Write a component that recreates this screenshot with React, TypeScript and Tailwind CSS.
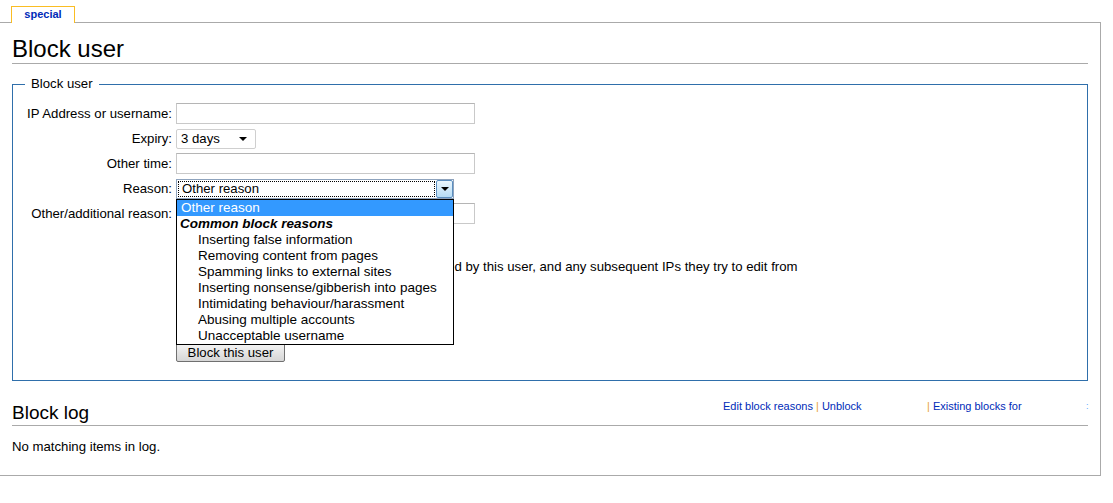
import React from 'react';

const reasons = [
    'Inserting false information',
    'Removing content from pages',
    'Spamming links to external sites',
    'Inserting nonsense/gibberish into pages',
    'Intimidating behaviour/harassment',
    'Abusing multiple accounts',
    'Unacceptable username',
];

function Row({ label, children }: { label?: string; children: React.ReactNode }) {
    return (
        <div className="flex h-[25px] items-center">
            <label className="w-[159px] shrink-0 text-right whitespace-nowrap">{label}</label>
            <div className="relative ml-[4px] flex items-center">{children}</div>
        </div>
    );
}

function TextInput() {
    return <div className="h-[21px] w-[299px] border border-[#c9c9c9] border-t-[#b5b5b5] bg-white" />;
}

export default function App() {
    return (
        <div className="min-h-screen bg-white pt-[6px] font-['Liberation_Sans',Arial,sans-serif] text-[13.2px] text-black">
            {/* Tabs */}
            <div className="flex pl-[11px]">
                <div className="relative z-10 -mb-px h-[17px] w-[64px] border border-b-0 border-[#fabd23] bg-white text-center text-[11px] leading-[15px] font-bold text-[#002bb8]">
                    special
                </div>
            </div>

            {/* Content box */}
            <div className="w-[1101px] border-y border-r border-[#aaaaaa] px-[12px] pb-[18px]">
                <h1 className="mt-[11px] border-b border-[#aaaaaa] text-[24px] leading-[29px] font-normal">Block user</h1>

                <fieldset className="mt-[12px] border border-[#2f6fab] pb-[17px]">
                    <legend className="ml-[12px] px-[6px] leading-[16px]">Block user</legend>
                    <div className="pt-[9px]">
                        <Row label="IP Address or username:">
                            <TextInput />
                        </Row>
                        <Row label="Expiry:">
                            <div className="mt-[1px] flex h-[20px] w-[80px] items-center justify-between rounded-[2px] border border-[#cfcfcf] bg-white pr-[8px] pl-[4px]">
                                <span>3 days</span>
                                <span className="h-0 w-0 border-x-[4px] border-t-[4px] border-x-transparent border-t-black" />
                            </div>
                        </Row>
                        <Row label="Other time:">
                            <TextInput />
                        </Row>
                        <Row label="Reason:">
                            <div className="mt-[1px] flex h-[20px] w-[278px] border border-[#8ea3bd] bg-white">
                                <div className="m-[1px] flex flex-1 items-center border border-dotted border-black pl-[3px] leading-[14px]">
                                    Other reason
                                </div>
                                <div className="flex w-[17px] items-center justify-center rounded-[2px] border border-[#5c8fc0] bg-gradient-to-b from-[#eaf6fd] to-[#b6dcf5]">
                                    <span className="h-0 w-0 border-x-[4px] border-t-[4px] border-x-transparent border-t-black" />
                                </div>
                            </div>
                            {/* Open dropdown list */}
                            <div className="absolute top-full left-0 z-20 w-[278px] border border-black bg-white text-[13.5px] leading-[16px] whitespace-nowrap">
                                <div className="h-[16px] bg-[#3399ff] pl-[4px] text-white">Other reason</div>
                                <div className="h-[16px] pl-[3px] font-bold italic">Common block reasons</div>
                                {reasons.map((r) => (
                                    <div key={r} className="h-[16px] pl-[21px]">
                                        {r}
                                    </div>
                                ))}
                            </div>
                        </Row>
                        <Row label="Other/additional reason:">
                            <TextInput />
                        </Row>

                        {/* Options (mostly behind the open list) */}
                        <div className="h-[28px]" />
                        <div className="flex h-[25px] items-center pl-[163px] whitespace-nowrap">
                            <span className="h-[13px] w-[13px] border border-[#1c5180] bg-white" />
                            <span className="ml-[15px]">
                                Automatically block the last IP address used by this user, and any subsequent IPs they try to edit from
                            </span>
                        </div>
                        <div className="h-[50px]" />

                        <div className="mt-[14px] pl-[163px]">
                            <button className="h-[19px] w-[109px] rounded-[2px] border border-[#707070] bg-gradient-to-b from-[#f4f4f4] to-[#d6d6d6] leading-[15px]">
                                Block this user
                            </button>
                        </div>
                    </div>
                </fieldset>

                {/* Block log */}
                <div className="mt-[19px] flex h-[26px] items-start border-b border-[#aaaaaa]">
                    <h2 className="w-[711px] shrink-0 text-[19px] leading-[25px] font-normal">Block log</h2>
                    <div className="flex text-[11px] leading-[13px] whitespace-nowrap text-[#002bb8]">
                        <span className="w-[204px] shrink-0">
                            Edit block reasons<span className="text-[#e8a33c]"> | </span>Unblock
                        </span>
                        <span className="w-[159px] shrink-0">
                            <span className="text-[#e8a33c]">|</span> Existing blocks for
                        </span>
                        <span className="text-[9px] text-[#5aa7ff]">:</span>
                    </div>
                </div>
                <p className="mt-[11px] leading-[20px]">No matching items in log.</p>
            </div>
        </div>
    );
}
